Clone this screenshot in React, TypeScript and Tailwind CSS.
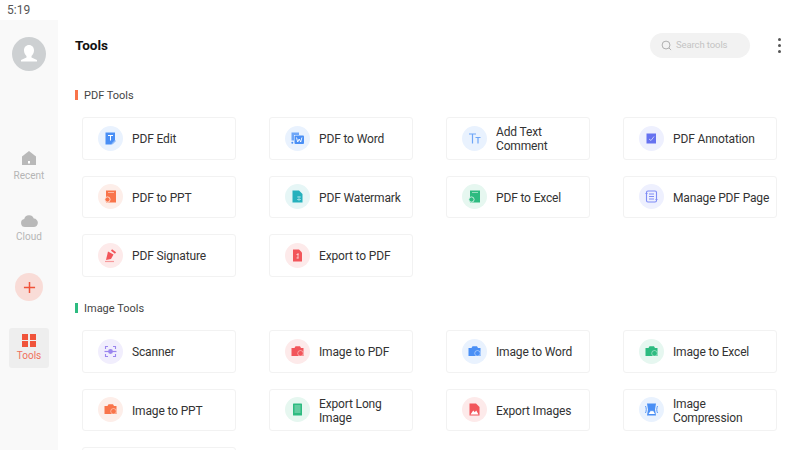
import type { ReactNode } from "react";

type Tool = { label: ReactNode; bg: string; icon?: ReactNode };

const cameraIcon = (color: string) => (
	<svg viewBox="0 0 25 25" className="size-[25px]">
		<path d="M6.500 9h3l1-1.700h4.500l1 1.700h2.500v8H6.500z" fill={color} />
		<circle cx="15.500" cy="14.300" r="2.800" fill={color} stroke="#fff" strokeOpacity="0.55" strokeWidth="0.8" />
	</svg>
);

const pdfTools: Tool[] = [
	{
		label: "PDF Edit",
		bg: "bg-[#e9f2fe]",
		icon: (
			<svg viewBox="0 0 25 25" className="size-[25px]">
				<path d="M7.500 6.500H17v8.500l-3.500 3.500h-6z" fill="#4a8ff5" />
				<path d="M10 9.500h5M12.500 9.500v5" stroke="#fff" strokeWidth="1" />
				<path d="M14 18l3.500-3.500" stroke="#8fbaf8" strokeWidth="1.500" />
			</svg>
		),
	},
	{
		label: "PDF to Word",
		bg: "bg-[#e9f2fe]",
		icon: (
			<svg viewBox="0 0 25 25" className="size-[25px]">
				<path d="M6.500 6.500h7.500v2.500H9v5.500H6.500z" fill="#6ea6f7" />
				<rect x="9.500" y="9.500" width="9.500" height="8.500" rx="1" fill="#4a8ff5" />
				<path d="M11.500 11.500l1.200 4.500 1.500-3 1.500 3 1.200-4.500" stroke="#fff" strokeWidth="0.9" fill="none" />
				<circle cx="7.300" cy="16.800" r="1" fill="#4a8ff5" />
			</svg>
		),
	},
	{
		label: (
			<>
				Add Text
				<br />
				Comment
			</>
		),
		bg: "bg-[#e9f2fe]",
		icon: (
			<svg viewBox="0 0 25 25" className="size-[25px]" fill="none" stroke="#6ea6f7" strokeWidth="1.200">
				<path d="M7 8h7M10.500 8v9.500M13.500 11.500h5M16 11.500v6" />
			</svg>
		),
	},
	{
		label: "PDF Annotation",
		bg: "bg-[#eef0fe]",
		icon: (
			<svg viewBox="0 0 25 25" className="size-[25px]">
				<rect x="7.500" y="7.500" width="9.500" height="10" fill="#6672f0" />
				<path d="M10 13l2 1.500 3-4" stroke="#c5cafa" strokeWidth="1" fill="none" />
			</svg>
		),
	},
	{
		label: "PDF to PPT",
		bg: "bg-[#fdeee9]",
		icon: (
			<svg viewBox="0 0 25 25" className="size-[25px]">
				<rect x="8" y="6.500" width="10" height="12" fill="#f9744a" />
				<path d="M10 8.500h6" stroke="#fff" strokeOpacity="0.7" strokeWidth="0.7" />
				<circle cx="9.500" cy="15.500" r="2.600" fill="#f9744a" stroke="#fdeee9" strokeWidth="0.8" />
			</svg>
		),
	},
	{
		label: "PDF Watermark",
		bg: "bg-[#e6f6f6]",
		icon: (
			<svg viewBox="0 0 25 25" className="size-[25px]">
				<path d="M7.500 6.500H14l3.500 3.500v8.500h-10z" fill="#26b1bd" />
				<path d="M12 13h4M12 15.500h4M14 12v5" stroke="#a5e0e4" strokeWidth="0.8" />
			</svg>
		),
	},
	{
		label: "PDF to Excel",
		bg: "bg-[#e6f7f0]",
		icon: (
			<svg viewBox="0 0 25 25" className="size-[25px]">
				<rect x="8" y="6.500" width="10" height="12" fill="#2dbb80" />
				<path d="M10 8.500h6" stroke="#fff" strokeOpacity="0.7" strokeWidth="0.7" />
				<circle cx="9.500" cy="15.500" r="2.600" fill="#2dbb80" stroke="#e6f7f0" strokeWidth="0.8" />
			</svg>
		),
	},
	{
		label: "Manage PDF Page",
		bg: "bg-[#eef0fe]",
		icon: (
			<svg viewBox="0 0 25 25" className="size-[25px]" fill="none" stroke="#7f8cf5" strokeWidth="1.100">
				<rect x="7.500" y="7" width="10" height="11" rx="1.500" />
				<path d="M10 10h5M10 12.500h5M10 15h5" />
				<path d="M6.500 9.500h2M16.500 15.500h2" />
			</svg>
		),
	},
	{
		label: "PDF Signature",
		bg: "bg-[#fdeaea]",
		icon: (
			<svg viewBox="0 0 25 25" className="size-[25px]">
				<path d="M10 8.500l5.500 3-2.500 4.500-5 1z" fill="#f2555a" />
				<path d="M13.500 7l4 3" stroke="#f2555a" strokeWidth="1.800" />
				<path d="M7 18.500h9" stroke="#f79a9c" strokeWidth="1.200" />
			</svg>
		),
	},
	{
		label: "Export to PDF",
		bg: "bg-[#fdeaea]",
		icon: (
			<svg viewBox="0 0 25 25" className="size-[25px]">
				<path d="M8 6.500h6l3 3v9H8z" fill="#f2555a" />
				<path d="M13 10v5.500M11.500 11.500h2M11.500 15h2" stroke="#fcd2d3" strokeWidth="0.9" />
			</svg>
		),
	},
];

const imageTools: Tool[] = [
	{
		label: "Scanner",
		bg: "bg-[#f1eefd]",
		icon: (
			<svg viewBox="0 0 25 25" className="size-[25px]" fill="none" stroke="#9b85ee" strokeWidth="1.100">
				<path d="M7.500 10V7.500H10M15 7.500h2.500V10M7.500 15v2.500H10M15 17.500h2.500V15" />
				<path d="M6.500 12.500h12" strokeWidth="1.200" />
				<circle cx="12.500" cy="12.500" r="2.400" fill="#9b85ee" stroke="none" />
			</svg>
		),
	},
	{ label: "Image to PDF", bg: "bg-[#fdeaea]", icon: cameraIcon("#f2555a") },
	{ label: "Image to Word", bg: "bg-[#e9f2fe]", icon: cameraIcon("#4a8ff5") },
	{ label: "Image to Excel", bg: "bg-[#e6f7f0]", icon: cameraIcon("#2dbb80") },
	{ label: "Image to PPT", bg: "bg-[#fdeee9]", icon: cameraIcon("#f9744a") },
	{
		label: (
			<>
				Export Long
				<br />
				Image
			</>
		),
		bg: "bg-[#e6f7f0]",
		icon: (
			<svg viewBox="0 0 25 25" className="size-[25px]">
				<rect x="8" y="6.500" width="9" height="12" rx="0.600" fill="#2dbb80" />
				<path d="M9.500 9h6M9.500 11h6M9.500 13h6M9.500 15h6" stroke="#c6eedd" strokeWidth="0.700" />
			</svg>
		),
	},
	{
		label: "Export Images",
		bg: "bg-[#fdeaea]",
		icon: (
			<svg viewBox="0 0 25 25" className="size-[25px]">
				<path d="M7.500 6.500H14l3.500 3.500v8.500h-10z" fill="#f2555a" />
				<path d="M8.500 17.500l2.700-4 1.600 1.700 1.400-1.700 2.300 4z" fill="#fff" />
			</svg>
		),
	},
	{
		label: (
			<>
				Image
				<br />
				Compression
			</>
		),
		bg: "bg-[#e9f2fe]",
		icon: (
			<svg viewBox="0 0 25 25" className="size-[25px]">
				<path d="M8 6.500h9l-1 6 1 6H8l1-6z" fill="#4a8ff5" />
				<path d="M9.500 17l2.500-3.500 1 1 1-1 2 3.500z" fill="#fff" />
				<path d="M6.500 9c1 2.300 1 4.700 0 7M18.500 9c-1 2.300-1 4.700 0 7" stroke="#4a8ff5" strokeWidth="0.900" fill="none" />
			</svg>
		),
	},
	// only the top edge of this row is on screen
	{ label: "", bg: "" },
];

function ToolCard({ tool }: { tool: Tool }) {
	return (
		<div className="flex h-[42.5px] items-center gap-[9px] rounded-[3px] border border-[#f2f2f2] bg-white pl-[15px]">
			<div className={`flex size-[25px] shrink-0 items-center justify-center rounded-full ${tool.bg}`}>
				{tool.icon}
			</div>
			<span className="translate-y-[0.5px] text-[12px] leading-[14px] tracking-[-0.15px] whitespace-nowrap text-[#333]">
				{tool.label}
			</span>
		</div>
	);
}

function Section({ title, bar, tools }: { title: string; bar: string; tools: Tool[] }) {
	return (
		<section>
			<div className="flex h-[12px] items-center gap-[6px]">
				<span className={`h-[10px] w-[3px] ${bar}`} />
				<span className="translate-y-[0.5px] text-[11px] text-[#444]">{title}</span>
			</div>
			<div className="mt-[16px] ml-[7px] grid w-[695px] grid-cols-[154px_144px_144px_154px] gap-x-[33px] gap-y-[16px]">
				{tools.map((tool, i) => (
					<ToolCard key={i} tool={tool} />
				))}
			</div>
		</section>
	);
}

export default function App() {
	return (
		<div className="h-[450px] w-[800px] overflow-hidden bg-white font-['Roboto',sans-serif]">
			<div className="flex h-[20px] items-center pl-[7px] text-[12px] text-[#555]">5:19</div>
			<div className="flex h-[430px]">
				{/* --- Sidebar --- */}
				<aside className="flex w-[58px] shrink-0 flex-col items-center bg-[#f9f9f9]">
					<div className="mt-[17px] flex size-[34px] items-center justify-center rounded-full bg-[#cdd0d2]">
						<svg viewBox="0 0 34 34" className="size-[34px]">
							<path d="M17 8c3 0 5 2.300 5 5.500 0 2.500-1.300 4.500-2.500 5.500v1.500l5.500 2.500v1.500H9V23l5.500-2.500V19c-1.200-1-2.500-3-2.500-5.500C12 10.300 14 8 17 8z" fill="#fff" />
						</svg>
					</div>
					<div className="mt-[79px] flex flex-col items-center">
						<svg viewBox="0 0 16 16" className="size-[16px]">
							<path d="M8 1l7 5.500V15H1V6.500z" fill="#b9b9b9" />
							<rect x="7" y="11" width="2" height="2.500" fill="#fff" />
						</svg>
						<span className="mt-[3px] text-[10px] leading-[13px] text-[#b5b5b5]">Recent</span>
					</div>
					<div className="mt-[31px] flex flex-col items-center">
						<svg viewBox="0 0 18 14" className="h-[14px] w-[18px]">
							<path d="M5 14a4 4 0 0 1-.8-7.900A5 5 0 0 1 13.800 5.600 4.200 4.200 0 0 1 13.500 14z" fill="#b9b9b9" />
						</svg>
						<span className="mt-[3px] text-[10px] leading-[13px] text-[#b5b5b5]">Cloud</span>
					</div>
					<div className="mt-[30px] flex size-[28px] items-center justify-center rounded-full bg-[#f9dcd7]">
						<svg viewBox="0 0 14 14" className="size-[13px]" stroke="#f0533a" strokeWidth="1.600">
							<path d="M7 1v12M1 7h12" />
						</svg>
					</div>
					<div className="mt-[27px] flex h-[40px] w-[40px] flex-col items-center justify-center rounded-[3px] bg-[#eeeeee]">
						<div className="grid grid-cols-2 gap-[1.500px]">
							<span className="size-[6px] bg-[#f0533a]" />
							<span className="size-[6px] bg-[#f0533a]" />
							<span className="size-[6px] bg-[#f0533a]" />
							<span className="size-[6px] bg-[#f0533a]" />
						</div>
						<span className="mt-[2px] text-[10px] leading-[13px] text-[#f0705c]">Tools</span>
					</div>
				</aside>

				{/* --- Main --- */}
				<main className="flex-1 pl-[17px]">
					<header className="flex h-[50px] items-center pr-[19px]">
						<h1 className="flex-1 text-[13.500px] font-bold text-[#111]">Tools</h1>
						<div className="flex h-[25px] w-[100px] items-center gap-[4px] rounded-full bg-[#f2f2f2] pl-[11px]">
							<svg viewBox="0 0 12 12" className="size-[11px]" fill="none" stroke="#a8a8a8" strokeWidth="1">
								<circle cx="5.500" cy="5.500" r="4.300" />
								<path d="M8.700 8.700l2.300 2.300" />
							</svg>
							<span className="text-[9.500px] tracking-[-0.1px] text-[#c4c4c4]">Search tools</span>
						</div>
						<div className="ml-[28px] flex flex-col gap-[3px]">
							<span className="size-[3px] rounded-full bg-[#555]" />
							<span className="size-[3px] rounded-full bg-[#555]" />
							<span className="size-[3px] rounded-full bg-[#555]" />
						</div>
					</header>
					<div className="mt-[19px] flex flex-col gap-[25.500px]">
						<Section title="PDF Tools" bar="bg-[#f9744a]" tools={pdfTools} />
						<Section title="Image Tools" bar="bg-[#2dbb80]" tools={imageTools} />
					</div>
				</main>
			</div>
		</div>
	);
}
